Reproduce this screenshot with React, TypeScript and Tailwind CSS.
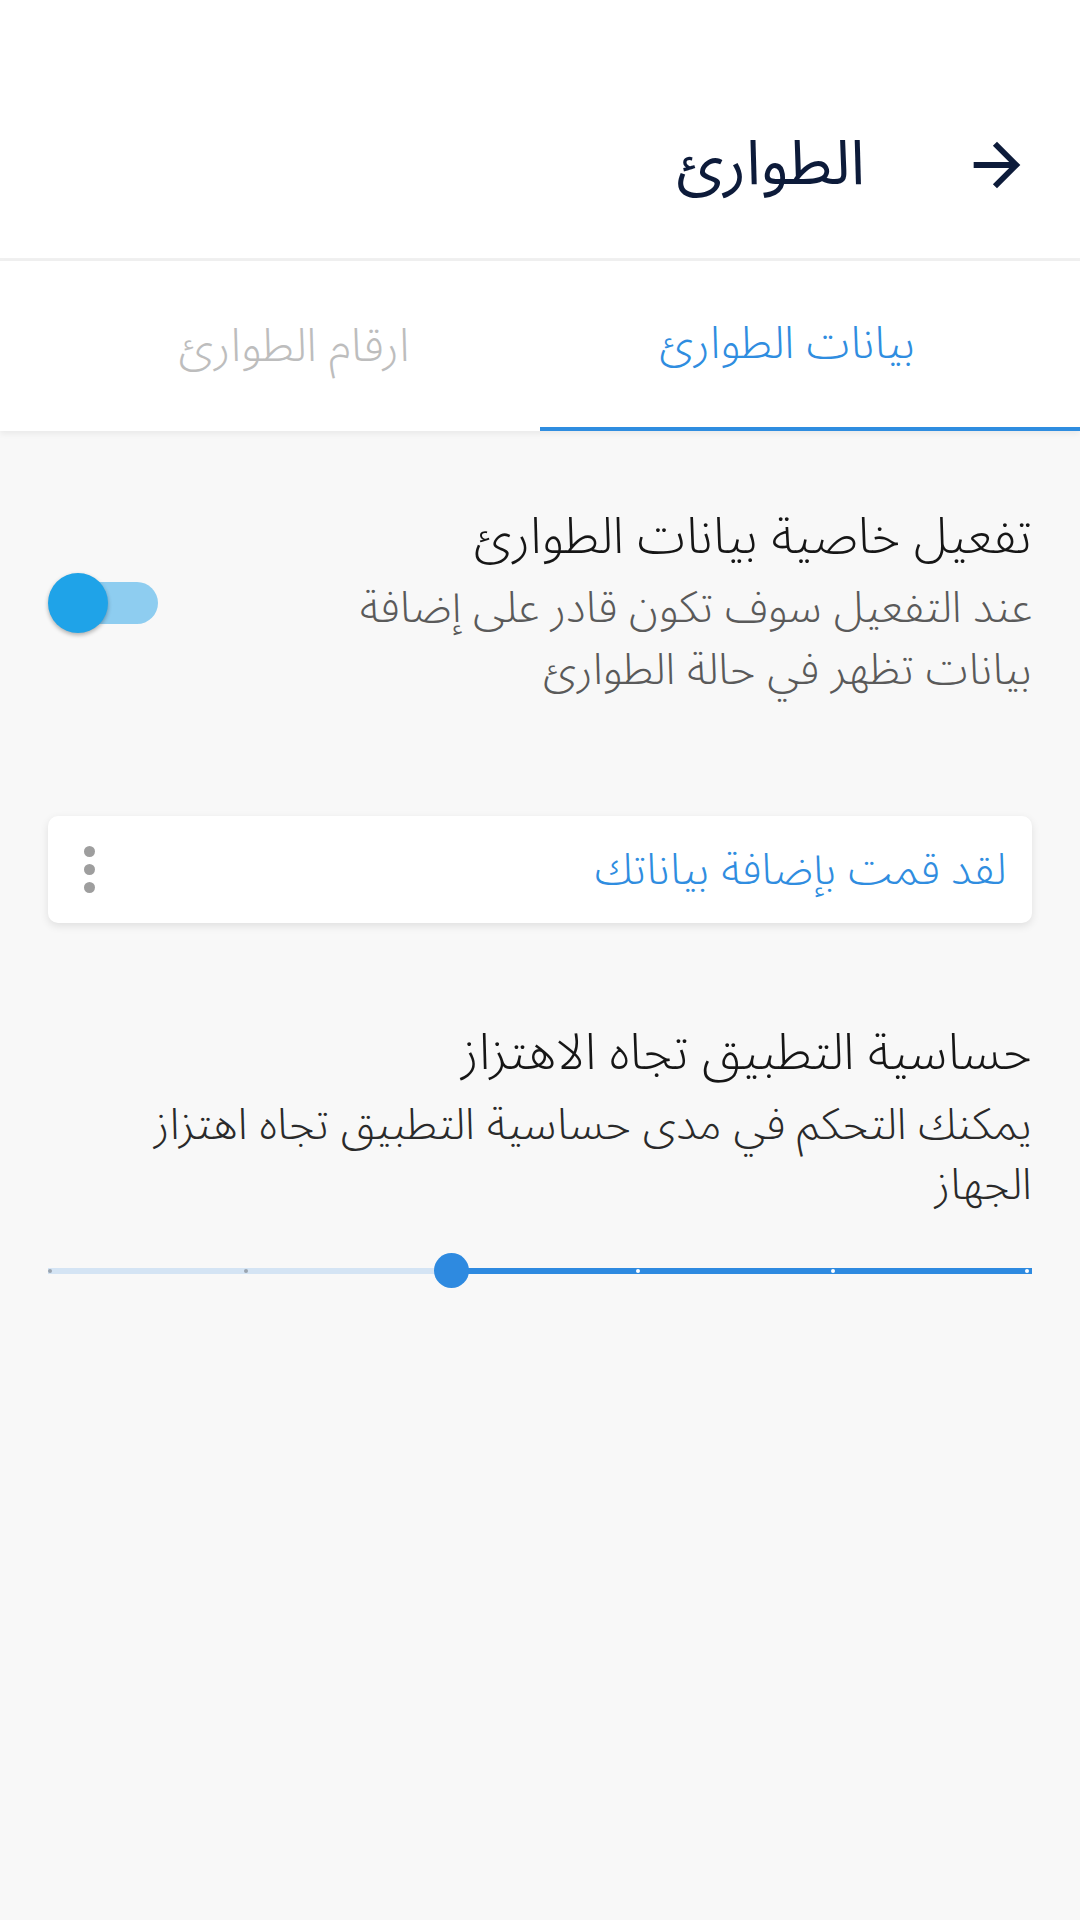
import React from "react";

const font = {
  fontFamily: '"Noto Sans Arabic", "DejaVu Sans", sans-serif',
};

const ticks = [
  { left: 0, active: false },
  { left: 196, active: false },
  { left: 588, active: true },
  { left: 783, active: true },
  { left: 977, active: true },
];

const BackArrow = () => (
  <svg width="70" height="70" viewBox="0 0 24 24" className="text-[#0d1b3a]">
    <path
      fill="currentColor"
      d="M12 4l-1.41 1.41L16.17 11H4v2h12.17l-5.58 5.59L12 20l8-8z"
    />
  </svg>
);

const Toggle = ({ on }: { on: boolean }) => (
  <div className="relative w-[110px] h-[60px] flex items-center shrink-0">
    <div className="ml-[10px] h-[42px] w-[100px] rounded-full bg-[#8ecdf0]" />
    <div
      className={`absolute top-0 h-[60px] w-[60px] rounded-full bg-[#1fa3e8] shadow-[0_2px_4px_rgba(0,0,0,0.3)] ${
        on ? "left-0" : "right-0"
      }`}
    />
  </div>
);

export default function App() {
  return (
    <div dir="rtl" style={font} className="min-h-[1920px] bg-[#f8f8f8] font-light">
      {/* app bar */}
      <header className="h-[258px] bg-white flex items-center pt-[72px] pr-[48px] gap-[97px]">
        <BackArrow />
        <h1 className="text-[62px] leading-none font-normal text-[#0d1b3a]">الطوارئ</h1>
      </header>
      <div className="h-[3px] bg-[#f0f0f0]" />

      {/* tabs */}
      <nav className="h-[170px] bg-white grid grid-cols-2 shadow-[0_3px_6px_rgba(0,0,0,0.06)]">
        <div className="flex flex-col">
          <div className="flex-1 flex items-center justify-center pr-[46px] text-[45px] text-[#2f8de0]">
            بيانات الطوارئ
          </div>
          <div className="h-[4px] bg-[#2f8de0]" />
        </div>
        <div className="flex items-center justify-center pl-[48px] text-[46px] text-[#bdbdbd]">
          ارقام الطوارئ
        </div>
      </nav>

      <main className="px-[48px]">
        {/* emergency data toggle */}
        <section className="mt-[74px] flex items-center justify-between">
          <div>
            <h2 className="text-[50px] leading-[64px] text-[#161616]">
              تفعيل خاصية بيانات الطوارئ
            </h2>
            <p className="mt-[8px] text-[44px] leading-[62px] text-[#5a5a5a]">
              عند التفعيل سوف تكون قادر على إضافة
              <br />
              بيانات تظهر في حالة الطوارئ
            </p>
          </div>
          <Toggle on />
        </section>

        {/* saved data card */}
        <div className="mt-[115px] h-[107px] bg-white rounded-[10px] shadow-[0_3px_8px_rgba(0,0,0,0.1)] flex items-center justify-between pr-[26px] pl-[36px]">
          <span className="text-[44px] text-[#2f8de0]">لقد قمت بإضافة بياناتك</span>
          <div className="flex flex-col gap-[7px]">
            <span className="w-[11px] h-[11px] rounded-full bg-[#9e9e9e]" />
            <span className="w-[11px] h-[11px] rounded-full bg-[#9e9e9e]" />
            <span className="w-[11px] h-[11px] rounded-full bg-[#9e9e9e]" />
          </div>
        </div>

        {/* sensitivity */}
        <section className="mt-[98px]">
          <h2 className="text-[50px] leading-[64px] text-[#161616]">
            حساسية التطبيق تجاه الاهتزاز
          </h2>
          <p className="mt-[10px] text-[44px] leading-[60px] text-[#2a2a2a]">
            يمكنك التحكم في مدى حساسية التطبيق تجاه اهتزاز
            <br />
            الجهاز
          </p>

          <div dir="ltr" className="relative mt-[38px] h-[36px] flex items-center">
            <div className="h-[6px] w-[403px] bg-[#d4e4f4]" />
            <div className="h-[6px] flex-1 bg-[#2e8ae0]" />
            {ticks.map((t) => (
              <span
                key={t.left}
                style={{ left: t.left }}
                className={`absolute top-[16px] w-[4px] h-[4px] rounded-full ${
                  t.active ? "bg-white" : "bg-[#9aa5b0]"
                }`}
              />
            ))}
            <span className="absolute left-[386px] top-0 w-[35px] h-[35px] rounded-full bg-[#2e8ae0]" />
          </div>
        </section>
      </main>
    </div>
  );
}
